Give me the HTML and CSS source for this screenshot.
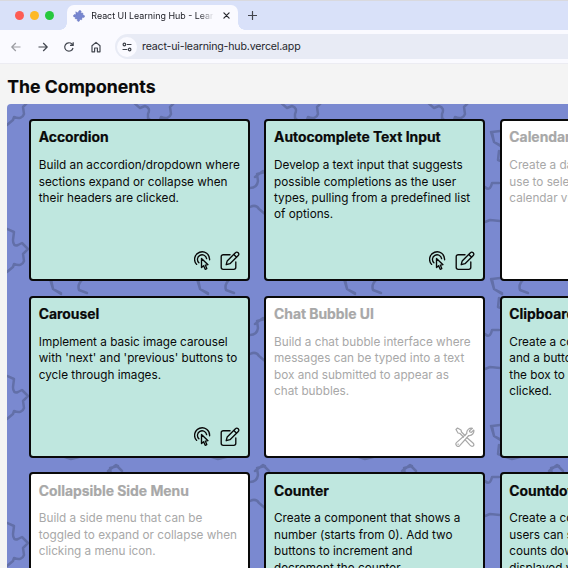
FILE: index.html
```html
<!DOCTYPE html>
<html lang="en">
<head>
<meta charset="utf-8">
<title>React UI Learning Hub</title>
<link rel="stylesheet" href="styles.css">
</head>
<body>
<svg class="defs" aria-hidden="true">
  <symbol id="click" viewBox="0 0 18 20">
    <path d="M2.6 13.4A7.5 7.5 0 1 1 15.6 8.8M4.9 11.7A4.6 4.6 0 1 1 12.6 7.6"/>
    <path d="M7.5 7.4V16.6L9.6 14.7L11.2 18.3L12.8 17.6L11.3 14.1L14 13.7Z"/>
  </symbol>
  <symbol id="edit" viewBox="0 0 20 20">
    <path d="M10 3.7H3.2A2 2 0 0 0 1.2 5.7V16.3A2 2 0 0 0 3.2 18.3H13.8A2 2 0 0 0 15.8 16.3V11"/>
    <path d="M6.2 13.7L7.2 9.9L15.2 1.9Q16.8.4 18.2 1.8T18 4.8L10 12.7ZM13.8 3.4L16.6 6.2"/>
  </symbol>
  <symbol id="tools" viewBox="0 0 20 20">
    <path d="M1 2.5L2.5 1L6 3L6.5 5L10 8.5M5 6.5L8.5 10M1 2.5L3 6L5 6.5M12 10.8L18 16Q19.7 18 18.2 19T15 18.2L10.3 12.8"/>
    <path d="M17.5 1.3A4.6 4.6 0 0 0 11.8 6.5L1.7 15.4A2.2 2.2 0 0 0 4.7 18.7L13.8 8.5A4.6 4.6 0 0 0 18.8 3L16.3 5.4L14.5 4.8V3.7ZM3 17.2H3.3"/>
  </symbol>
</svg>

<header class="browser">
  <div class="tabs">
    <div class="lights"><i class="red"></i><i class="yellow"></i><i class="green"></i></div>
    <div class="tab">
      <svg class="favicon" width="12" height="12" viewBox="0 0 12 12"><path d="M3 2L5 3L6 .8Q7.8 0 8.2 1.5L7.6 3L10 3.2L9.7 5Q12 5 11.4 7Q10.7 8 9.1 7.2L8.7 9.8L6.8 9.3Q6.8 12 4.9 11.3Q3.8 10.7 4.5 9L2.2 8.7L2.4 6.8Q.2 7.5.5 5.4Q1 4 2.9 4.7Z"/></svg>
      <span class="tab-title">React UI Learning Hub - Learn</span>
      <svg class="close" width="7" height="7" viewBox="0 0 7 7"><path d="M.9.9L6.1 6.1M6.1.9L.9 6.1"/></svg>
    </div>
    <svg class="plus" width="9" height="9" viewBox="0 0 9 9"><path d="M4.5.5V8.5M.5 4.5H8.5"/></svg>
  </div>
  <div class="toolbar">
    <svg class="nav dim" viewBox="0 0 12 12"><path d="M10.5 6H2M5.8 2L1.8 6L5.8 10"/></svg>
    <svg class="nav" viewBox="0 0 12 12"><path d="M1.5 6H10M6.2 2L10.2 6L6.2 10"/></svg>
    <svg class="nav" viewBox="0 0 12 12"><path d="M10 7A4.2 4.2 0 1 1 8.9 3L10.2 4.3M10.2 1.2V4.4H7"/></svg>
    <svg class="nav" viewBox="0 0 12 12"><path d="M2 10.8V4.7L6 1.4L10 4.7V10.8H7.4V7H4.6V10.8Z"/></svg>
    <div class="address">
      <span class="site"><svg width="10" height="10" viewBox="0 0 10 10"><path d="M5.3 2.5H9M1 7.5H4.7"/><circle cx="2.4" cy="2.5" r="1.3"/><circle cx="7.6" cy="7.5" r="1.3"/></svg></span>
      <span class="url">react-ui-learning-hub.vercel.app</span>
    </div>
  </div>
</header>

<main>
  <h1>The Components</h1>
  <div class="board">
    <article class="card">
      <h2>Accordion</h2>
      <p>Build an accordion/dropdown where<br>sections expand or collapse when<br>their headers are clicked.</p>
      <div class="actions"><svg class="click"><use href="#click"/></svg><svg class="edit"><use href="#edit"/></svg></div>
    </article>
    <article class="card">
      <h2>Autocomplete Text Input</h2>
      <p>Develop a text input that suggests<br>possible completions as the user<br>types, pulling from a predefined list<br>of options.</p>
      <div class="actions"><svg class="click"><use href="#click"/></svg><svg class="edit"><use href="#edit"/></svg></div>
    </article>
    <article class="card soon">
      <h2>Calendar</h2>
      <p>Create a date picker<br>use to select a date<br>calendar view.</p>
    </article>
    <article class="card">
      <h2>Carousel</h2>
      <p>Implement a basic image carousel<br>with 'next' and 'previous' buttons to<br>cycle through images.</p>
      <div class="actions"><svg class="click"><use href="#click"/></svg><svg class="edit"><use href="#edit"/></svg></div>
    </article>
    <article class="card soon">
      <h2>Chat Bubble UI</h2>
      <p>Build a chat bubble interface where<br>messages can be typed into a text<br>box and submitted to appear as<br>chat bubbles.</p>
      <div class="actions"><svg class="edit"><use href="#tools"/></svg></div>
    </article>
    <article class="card">
      <h2>Clipboard</h2>
      <p>Create a component<br>and a button that<br>the box to be<br>clicked.</p>
    </article>
    <article class="card soon">
      <h2>Collapsible Side Menu</h2>
      <p>Build a side menu that can be<br>toggled to expand or collapse when<br>clicking a menu icon.</p>
    </article>
    <article class="card">
      <h2>Counter</h2>
      <p>Create a component that shows a<br>number (starts from 0). Add two<br>buttons to increment and<br>decrement the counter.</p>
    </article>
    <article class="card">
      <h2>Countdown</h2>
      <p>Create a component<br>users can set<br>counts down<br>displayed with</p>
    </article>
  </div>
</main>
</body>
</html>
```
FILE: styles.css
```css
* { box-sizing: border-box; }
html { overflow: hidden; }
body {
  margin: 0;
  height: 568px;
  overflow: hidden;
  background: #f4f4f4;
  color: #090909;
  font-family: Inter, sans-serif;
}
svg { fill: none; stroke: currentColor; stroke-linecap: round; stroke-linejoin: round; flex: none; }
.defs { display: none; }

.browser { height: 64px; background: #fafaff; border-bottom: 1px solid #ececf2; }
.tabs {
  display: flex;
  height: 30px;
  background: linear-gradient(#d9d9de 0 1px, #d9e1f9 1px);
}
.lights { display: flex; gap: 5.8px; width: 67px; padding: 11px 0 0 15px; }
.lights i { width: 9px; height: 9px; border-radius: 50%; }
.red { background: #fd5c54; }
.yellow { background: #fdb927; }
.green { background: #27c83d; }
.tab {
  display: flex;
  align-items: center;
  width: 171px;
  height: 25px;
  margin-top: 5px;
  padding: 0 8px 4px 6px;
  border-radius: 7px 7px 0 0;
  background: #fafaff;
  position: relative;
}
.tab::before, .tab::after { content: ""; position: absolute; bottom: 0; width: 7px; height: 7px; }
.tab::before { left: -7px; background: radial-gradient(circle at 0 0, transparent 6.5px, #fafaff 7px); }
.tab::after { right: -7px; background: radial-gradient(circle at 100% 0, transparent 6.5px, #fafaff 7px); }
.favicon { fill: #7786d0; stroke: #6675bd; stroke-width: .5; }
.tab-title {
  width: 123px;
  margin-left: 6.3px;
  overflow: hidden;
  white-space: nowrap;
  font-size: 8.9px;
  line-height: 14px;
  color: #202128;
  -webkit-mask-image: linear-gradient(90deg, #000 108px, transparent 123px);
  mask-image: linear-gradient(90deg, #000 108px, transparent 123px);
}
.close { margin-left: 9px; stroke: #26272d; stroke-width: 1.2; }
.plus { margin: 11px 0 0 10px; stroke: #43454e; stroke-width: 1.2; }
.toolbar { display: flex; align-items: center; height: 33px; padding: 0 0 0 10px; gap: 14.5px; }
.nav { width: 12px; height: 12px; stroke: #42464f; stroke-width: 1.2; stroke-linecap: butt; }
.nav.dim { stroke: #9b9ca2; }
.address {
  display: flex;
  align-items: center;
  flex: 1;
  height: 25px;
  margin-left: -1px;
  padding-left: 2px;
  border-radius: 13px 0 0 13px;
  background: #e8ebf5;
}
.site { display: flex; align-items: center; justify-content: center; width: 20px; height: 20px; border-radius: 50%; background: #fafaff; stroke-width: 1.2; color: #3d4048; }
.url { margin-left: 5px; font-size: 10.6px; letter-spacing: -.17px; color: #25262c; }

main { padding: 11.5px 0 0 7.2px; }
h1 { margin: 0; height: 28.9px; font-size: 17.65px; line-height: 22px; font-weight: 700; letter-spacing: .03px; -webkit-text-stroke: .15px; }
.board {
  display: grid;
  grid-template-columns: repeat(3, 220.6px);
  grid-auto-rows: 161.9px;
  gap: 14.7px;
  width: 735px;
  height: 620px;
  padding: 14.8px 0 0 21.9px;
  border-radius: 4px 0 0 0;
  background: #7a89d0 url("data:image/svg+xml,%3Csvg xmlns='http://www.w3.org/2000/svg' width='147' height='147' fill='none' stroke='%23626fa8' stroke-width='2.5' stroke-linejoin='round' stroke-linecap='round'%3E%3Cpath d='M0 125L7 128L6 136Q6 143 11 141L15 139L21 145L16 150L17 157Q15 163 7 160L6 163L0 168M0-22L7-19L6-11Q6-4 11-6L15-8L21-2L16 3L17 10Q15 16 7 13L6 16L0 21M126-2L133 4L138 2Q144 4 141 10L141 14L147 20M111 68L103 70L104 77Q103 84 96 84M96 103Q102 100 105 105L111 110M37 83Q42 88 44 79L51 79M37 118L42 116L52 117M52 27L44 28L46 38L54 42M43 28L46 38L54 43M76 28Q70 33 72 39L80 42M51 47L50 56L58 59L64 61L72 59M101 73L109 67L115 73'/%3E%3C/svg%3E") 0 0 / 147px 147px;
}
.card {
  display: flex;
  flex-direction: column;
  padding: 7.2px 7.7px 8.4px;
  border: 2.2px solid #090909;
  border-radius: 4px;
  background: #bfe7df;
  overflow: hidden;
  white-space: nowrap;
}
.card.soon { background: #fff; color: #a8a8a8; }
h2 { margin: 0 0 10.7px; font-size: 13.9px; line-height: 18px; font-weight: 700; letter-spacing: -.02px; -webkit-text-stroke: .2px; }
p { margin: 0; font-size: 11.74px; line-height: 16.45px; }
.actions { display: flex; justify-content: flex-end; gap: 8px; margin-top: auto; }
.actions svg { height: 20px; stroke-width: 1.35; }
.actions .click { width: 18px; }
.actions .edit { width: 20px; }
.soon .actions svg { stroke-width: 1.2; }
```
